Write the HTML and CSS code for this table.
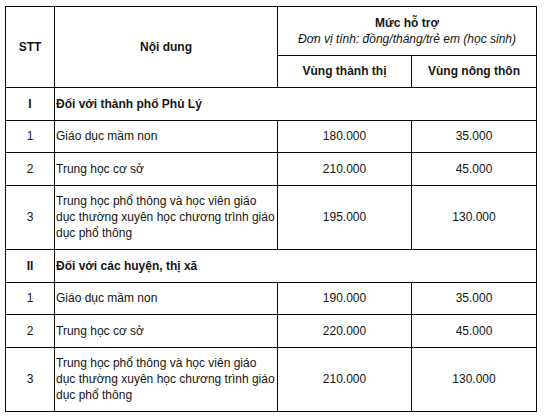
FILE: index.html
```html
<!DOCTYPE html>
<html lang="vi">
<head>
<meta charset="utf-8">
<link rel="stylesheet" href="styles.css">
</head>
<body>
<table class="tbl">
  <colgroup>
    <col class="c-stt">
    <col class="c-nd">
    <col class="c-tt">
    <col class="c-nt">
  </colgroup>
  <thead>
    <tr>
      <th rowspan="2">STT</th>
      <th rowspan="2">Nội dung</th>
      <th colspan="2">Mức hỗ trợ<br><span class="unit">Đơn vị tính: đồng/tháng/trẻ em (học sinh)</span></th>
    </tr>
    <tr>
      <th>Vùng thành thị</th>
      <th>Vùng nông thôn</th>
    </tr>
  </thead>
  <tbody>
    <tr class="group">
      <td class="num">I</td>
      <td class="txt" colspan="3">Đối với thành phố Phủ Lý</td>
    </tr>
    <tr>
      <td class="num">1</td>
      <td class="txt">Giáo dục mầm non</td>
      <td class="num">180.000</td>
      <td class="num">35.000</td>
    </tr>
    <tr>
      <td class="num">2</td>
      <td class="txt">Trung học cơ sở</td>
      <td class="num">210.000</td>
      <td class="num">45.000</td>
    </tr>
    <tr>
      <td class="num">3</td>
      <td class="txt">Trung học phổ thông và học viên giáo dục thường xuyên học chương trình giáo dục phổ thông</td>
      <td class="num">195.000</td>
      <td class="num">130.000</td>
    </tr>
    <tr class="group">
      <td class="num">II</td>
      <td class="txt" colspan="3">Đối với các huyện, thị xã</td>
    </tr>
    <tr>
      <td class="num">1</td>
      <td class="txt">Giáo dục mầm non</td>
      <td class="num">190.000</td>
      <td class="num">35.000</td>
    </tr>
    <tr>
      <td class="num">2</td>
      <td class="txt">Trung học cơ sở</td>
      <td class="num">220.000</td>
      <td class="num">45.000</td>
    </tr>
    <tr>
      <td class="num">3</td>
      <td class="txt">Trung học phổ thông và học viên giáo dục thường xuyên học chương trình giáo dục phổ thông</td>
      <td class="num">210.000</td>
      <td class="num">130.000</td>
    </tr>
  </tbody>
</table>
</body>
</html>
```
FILE: styles.css
```css
html, body {
  margin: 0;
  background: #ffffff;
}
body {
  padding: 6px 0 0 5px;
  font-family: "Liberation Sans", Arial, sans-serif;
  font-size: 12px;
  line-height: 16px;
  color: #151515;
}
.tbl {
  border-collapse: collapse;
  table-layout: fixed;
  width: 531px;
}
.c-stt { width: 49px; }
.c-nd { width: 223px; }
.c-tt { width: 134px; }
.c-nt { width: 125px; }
.tbl th, .tbl td {
  border: 1px solid #0a0a0a;
  padding: 7.75px 1px;
  vertical-align: middle;
}
.tbl th {
  font-weight: bold;
  text-align: center;
}
.unit {
  font-weight: normal;
  font-style: italic;
}
.num { text-align: center; }
.txt { text-align: left; }
.group td { font-weight: bold; }
```
